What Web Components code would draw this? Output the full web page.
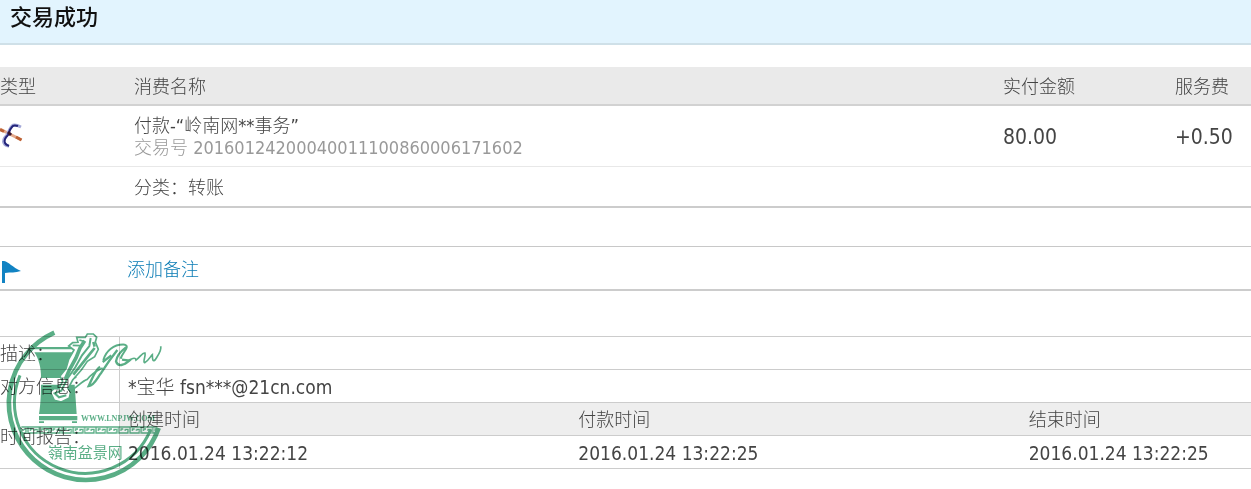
<!DOCTYPE html>
<html lang="zh-CN">
<head>
<meta charset="utf-8">
<title>交易成功</title>
<style>
  body {
    margin: 0;
    background: #fff;
    color: #444;
    font-family: "DejaVu Sans Condensed", "Noto Sans CJK SC", sans-serif;
    font-size: 18px;
    font-weight: 300;
    line-height: 22px;
  }
</style>
</head>
<body>
<trade-page></trade-page>

<script>
class StatusBanner extends HTMLElement {
  constructor() {
    super();
    this.attachShadow({ mode: "open" });
  }

  connectedCallback() {
    this.shadowRoot.innerHTML = `
      <style>
        :host {
          display: block;
          padding: 5px 10px 12px;
          background: #e2f4fe;
          border-bottom: 2px solid #cfe0e8;
        }

        h1 {
          margin: 0;
          color: #111;
          font-size: 22px;
          font-weight: 500;
          line-height: 26px;
        }
      </style>
      <h1><slot></slot></h1>
    `;
  }
}
customElements.define("status-banner", StatusBanner);

class TransferIcon extends HTMLElement {
  constructor() {
    super();
    this.attachShadow({ mode: "open" });
  }

  connectedCallback() {
    this.shadowRoot.innerHTML = `
      <style>
        :host, svg { display: block; }
      </style>
      <svg width="24" height="32" viewBox="0 0 24 32" fill="none" aria-hidden="true">
        <path d="M0 8 L21.500 19" stroke="#e3a98c" stroke-width="3"/>
        <path d="M0 8.500 L4 10.500 M16 16 L21.500 19" stroke="#bd6235" stroke-width="3"/>
        <path d="M21 6 C17 4 14 3 12 5 C9 8 9 11 7 14 C4 17 3 20 4 22 C5 24 7 25 9 25" stroke="#a3a8d8" stroke-width="3"/>
        <path d="M18 5 C15 4 13 4 12 6 C9 9 9 12 8 14 C5 17 4 20 5 22 C6 24 7 24 9 25" stroke="#24247a" stroke-width="2"/>
        <path d="M8 11 L11 14" stroke="#36162f" stroke-width="3"/>
      </svg>
    `;
  }
}
customElements.define("transfer-icon", TransferIcon);

class TradeTable extends HTMLElement {
  constructor() {
    super();
    this.attachShadow({ mode: "open" });
  }

  connectedCallback() {
    this.shadowRoot.innerHTML = `
      <style>
        :host { display: block; }

        table {
          width: 100%;
          border-collapse: separate;
          border-spacing: 0;
          table-layout: fixed;
          border-bottom: 2px solid #ccc;
        }

        .type { width: 134px; }
        .paid { width: 172px; }
        .fee { width: 76px; }

        th, td {
          padding: 2px 0 0;
          text-align: left;
          font-weight: inherit;
        }

        th {
          height: 35px;
          background: #eaeaea;
          border-bottom: 2px solid #d2d2d2;
        }

        .main td {
          height: 58px;
          border-bottom: 1px solid #e8e8e8;
        }

        .sub td { height: 37px; }

        p { margin: 0; }

        .number { color: #999; }

        .amount { font-size: 21px; }
      </style>
      <table>
        <colgroup>
          <col class="type"><col><col class="paid"><col class="fee">
        </colgroup>
        <thead>
          <tr><th>类型</th><th>消费名称</th><th>实付金额</th><th>服务费</th></tr>
        </thead>
        <tbody>
          <tr class="main">
            <td><transfer-icon></transfer-icon></td>
            <td>
              <p>付款-“岭南网**事务”</p>
              <p class="number">交易号 20160124200040011100860006171602</p>
            </td>
            <td class="amount">80.00</td>
            <td class="amount">+0.50</td>
          </tr>
          <tr class="sub">
            <td></td>
            <td colspan="3">分类：转账</td>
          </tr>
        </tbody>
      </table>
    `;
  }
}
customElements.define("trade-table", TradeTable);

class NoteBar extends HTMLElement {
  constructor() {
    super();
    this.attachShadow({ mode: "open" });
  }

  connectedCallback() {
    this.shadowRoot.innerHTML = `
      <style>
        :host {
          display: grid;
          grid-template-columns: 127px 1fr;
          align-items: center;
          padding: 10px 0 6px;
          border-top: 1px solid #c8c8c8;
          border-bottom: 2px solid #ccc;
        }

        svg { display: block; }

        a {
          color: #0b7cb5;
          text-decoration: none;
        }
      </style>
      <svg width="24" height="26" viewBox="0 0 24 26" aria-hidden="true">
        <path d="M2 4 H4 C9 5 12 10 21 14 C15 16 11 15 5 16 V26 H2 Z" fill="#1283c3"/>
      </svg>
      <div><a href="#"><slot></slot></a></div>
    `;
  }
}
customElements.define("note-bar", NoteBar);

class SiteStamp extends HTMLElement {
  constructor() {
    super();
    this.attachShadow({ mode: "open" });
  }

  connectedCallback() {
    this.shadowRoot.innerHTML = `
      <style>
        :host {
          display: block;
          color: #5aae86;
          mix-blend-mode: multiply;
          pointer-events: none;
        }

        svg { display: block; }

        .url {
          font: bold 24px "Liberation Serif", serif;
        }

        .name {
          font: 45px "Noto Sans CJK SC", sans-serif;
        }
      </style>
      <svg width="170" height="169" viewBox="0 0 510 507" fill="none" stroke="currentColor">
        <defs>
          <pattern id="meander" x="64" y="318" width="34" height="24" patternUnits="userSpaceOnUse">
            <path d="M0 21 H14 V10 H6 V15 M0 3 H20 V21 H34 M20 3 H34 M27 15 V9 H34" stroke="#5aae86" stroke-width="4"/>
          </pattern>
        </defs>

        <!-- ring -->
        <path d="M163 38 A231 231 0 1 0 476 324" stroke-width="14"/>
        <path d="M60 166 A211 211 0 1 0 452 329" stroke-width="9"/>

        <!-- pot -->
        <g fill="currentColor" stroke="none">
          <path d="M100 81 H248 V88 H100 Z"/>
          <path d="M103 97 H242 C229 119 224 145 224 174 H123 C124 143 116 117 103 97 Z"/>
          <path d="M123 194 H224 L230 282 H117 C121 260 123 230 123 194 Z"/>
          <path d="M117 288 H232 V301 H117 Z M117 304 H132 V309 H117 Z M216 304 H231 V309 H216 Z"/>
        </g>

        <!-- trunk -->
        <path d="M256 52 L262 42 L280 42 L290 52 L286 66 L295 88 L284 110 L262 124 L244 150 L218 180 L204 206 L212 216 L208 234 L184 246 L163 241 L151 216 L162 206 L177 206 L188 184 L180 168 L198 146 L206 118 L222 90 L206 78 L218 68 L234 67 L230 52 Z" fill="#fff" stroke-width="5"/>
        <path d="M254 62 L240 84 L228 114 L208 150 L196 178" stroke-width="11"/>
        <path d="M272 54 L268 78 L246 106 L226 142 L202 176 L184 212 L164 220 L177 232 L199 226" stroke-width="6"/>
        <path d="M284 84 L266 106 L244 134 L220 164 M280 66 L284 80" stroke-width="8"/>
        <path d="M218 76 L240 77 M238 60 L252 64" stroke-width="5"/>

        <!-- branch -->
        <path d="M207 213 C226 210 244 183 262 178 C279 156 300 148 308 144" stroke-width="5"/>
        <path d="M310 120 C318 94 340 72 374 74 C392 80 366 98 362 116" stroke-width="6"/>
        <path d="M300 140 C284 152 276 178 266 198 C284 196 292 172 304 158 C318 136 336 110 352 90" stroke-width="7"/>
        <path d="M308 126 L334 106 M378 82 C362 94 350 108 348 124 C354 142 372 136 388 122 L366 119" stroke-width="7"/>
        <path d="M386 120 C396 117 406 110 408 120 C420 112 427 97 435 99 C438 109 427 126 434 128 C447 121 452 108 457 104 C457 120 459 127 466 119 C474 106 486 91 482 79" stroke-width="5"/>
        <path d="M223 174 L229 171" stroke-width="5"/>

        <rect x="64" y="318" width="408" height="24" fill="url(#meander)" stroke="none"/>
        <g fill="currentColor" stroke="none">
          <text class="url" x="243" y="303">WWW.LNPJW.COM</text>
          <text class="name" x="143" y="415">嶺南盆景网</text>
        </g>
      </svg>
    `;
  }
}
customElements.define("site-stamp", SiteStamp);

class DetailTable extends HTMLElement {
  constructor() {
    super();
    this.attachShadow({ mode: "open" });
  }

  connectedCallback() {
    this.shadowRoot.innerHTML = `
      <style>
        :host {
          display: block;
          position: relative;
        }

        table {
          width: 100%;
          border-collapse: separate;
          border-spacing: 0;
          table-layout: fixed;
          border-top: 1px solid #ccc;
        }

        .label { width: 120px; }
        .wide { width: 36%; }

        th, td {
          height: 30px;
          padding: 2px 0 0 8px;
          border-bottom: 1px solid #ccc;
          text-align: left;
          font-weight: inherit;
        }

        th[scope="row"] {
          padding-left: 0;
          border-right: 1px solid #ccc;
        }

        th[scope="col"] { background: #eee; }

        td { font-size: 19px; }

        site-stamp {
          position: absolute;
          top: -16px;
          left: 0;
        }
      </style>
      <table>
        <colgroup>
          <col class="label"><col class="wide"><col class="wide"><col>
        </colgroup>
        <tbody>
          <tr><th scope="row">描述：</th><td colspan="3"></td></tr>
          <tr><th scope="row">对方信息：</th><td colspan="3">*宝华 fsn***@21cn.com</td></tr>
          <tr>
            <th scope="row" rowspan="2">时间报告：</th>
            <th scope="col">创建时间</th>
            <th scope="col">付款时间</th>
            <th scope="col">结束时间</th>
          </tr>
          <tr>
            <td>2016.01.24 13:22:12</td>
            <td>2016.01.24 13:22:25</td>
            <td>2016.01.24 13:22:25</td>
          </tr>
        </tbody>
      </table>
      <site-stamp></site-stamp>
    `;
  }
}
customElements.define("detail-table", DetailTable);

class TradePage extends HTMLElement {
  constructor() {
    super();
    this.attachShadow({ mode: "open" });
  }

  connectedCallback() {
    this.shadowRoot.innerHTML = `
      <style>
        :host { display: block; }

        main {
          display: block;
          padding-bottom: 18px;
        }

        trade-table { margin-top: 22px; }
        note-bar { margin-top: 38px; }
        detail-table { margin-top: 45px; }
      </style>
      <main>
        <status-banner>交易成功</status-banner>
        <trade-table></trade-table>
        <note-bar>添加备注</note-bar>
        <detail-table></detail-table>
      </main>
    `;
  }
}
customElements.define("trade-page", TradePage);
</script>
</body>
</html>
